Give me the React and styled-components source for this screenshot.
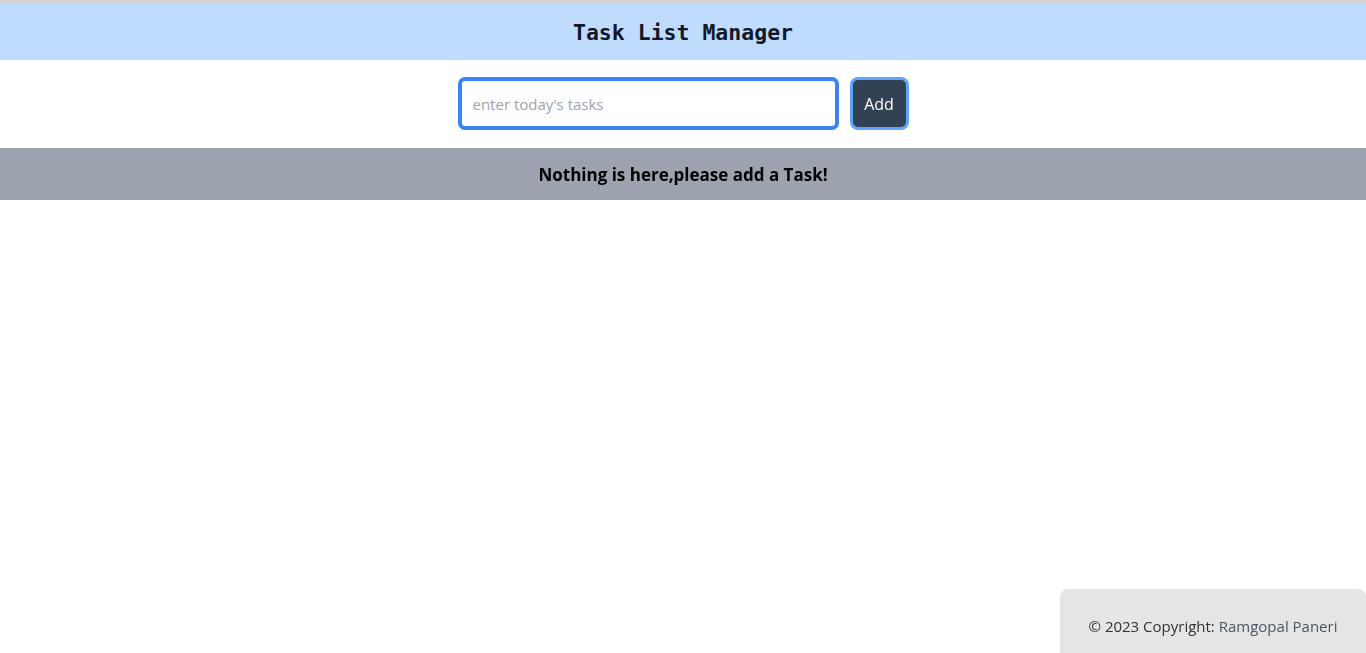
import React, { useState } from "react";
import styled, { createGlobalStyle } from "styled-components";

const GlobalStyle = createGlobalStyle`
    html, body {
        margin: 0;
        padding: 0;
        background: #fff;
        font-family: "Open Sans", "Noto Sans", "Liberation Sans", sans-serif;
    }
    * {
        box-sizing: border-box;
    }
`;

function App() {
    const [task, setTask] = useState("");
    const [tasks, setTasks] = useState([]);

    const addTask = () => {
        if (!task.trim()) return;
        setTasks([...tasks, task.trim()]);
        setTask("");
    };

    return (
        <Page>
            <GlobalStyle />
            <Header>
                <Title>Task List Manager</Title>
            </Header>
            <Form
                onSubmit={(e) => {
                    e.preventDefault();
                    addTask();
                }}
            >
                <TaskInput
                    value={task}
                    onChange={(e) => setTask(e.target.value)}
                    placeholder="enter today's tasks"
                    autoFocus
                />
                <AddButton type="submit">Add</AddButton>
            </Form>
            {tasks.length === 0 ? (
                <EmptyBand>Nothing is here,please add a Task!</EmptyBand>
            ) : (
                <TaskList>
                    {tasks.map((t, i) => (
                        <TaskItem key={i}>{t}</TaskItem>
                    ))}
                </TaskList>
            )}
            <Footer>
                © 2023 Copyright: <Author>Ramgopal Paneri</Author>
            </Footer>
        </Page>
    );
}

const Page = styled.div`
    min-height: 100vh;
    display: flex;
    flex-direction: column;
    border-top: 3px solid #d4d4d4;
`;
const Header = styled.header`
    height: 57px;
    padding-top: 2px;
    background: #bfdbfe;
    display: flex;
    align-items: center;
    justify-content: center;
`;
const Title = styled.h1`
    margin: 0;
    font-family: "DejaVu Sans Mono", "Liberation Mono", monospace;
    font-size: 21.5px;
    font-weight: bold;
    color: #111827;
`;
const Form = styled.form`
    display: flex;
    justify-content: center;
    align-items: center;
    gap: 11px;
    padding: 17px 0 18px 0;
`;
const TaskInput = styled.input`
    width: 381px;
    height: 53px;
    border: 4px solid #3b82f6;
    border-radius: 7px;
    padding: 0 11px;
    font-family: "Open Sans", "Noto Sans", sans-serif;
    font-size: 15px;
    color: #111827;
    outline: none;
    &::placeholder {
        color: #9ca3af;
    }
`;
const AddButton = styled.button`
    width: 59px;
    height: 53px;
    background: #334155;
    border: 3px solid #60a5fa;
    border-radius: 8px;
    color: #fff;
    font-family: "Open Sans", "Noto Sans", sans-serif;
    font-size: 16px;
    cursor: pointer;
`;
const EmptyBand = styled.div`
    height: 52px;
    background: #9ca3af;
    display: flex;
    align-items: center;
    justify-content: center;
    font-size: 17px;
    font-weight: bold;
    color: #000;
`;
const TaskList = styled.ul`
    margin: 0;
    padding: 0;
    list-style: none;
`;
const TaskItem = styled.li`
    padding: 14px;
    background: #e5e7eb;
    border-bottom: 1px solid #fff;
    text-align: center;
`;
const Footer = styled.footer`
    margin-top: auto;
    align-self: flex-end;
    width: 306px;
    height: 64px;
    background: #e5e5e5;
    border-top-left-radius: 8px;
    border-top-right-radius: 8px;
    display: flex;
    align-items: flex-end;
    justify-content: center;
    padding-bottom: 17px;
    font-size: 15px;
    color: #333;
    white-space: pre;
`;
const Author = styled.span`
    color: #4b5563;
    font-weight: 500;
`;

export default App;
